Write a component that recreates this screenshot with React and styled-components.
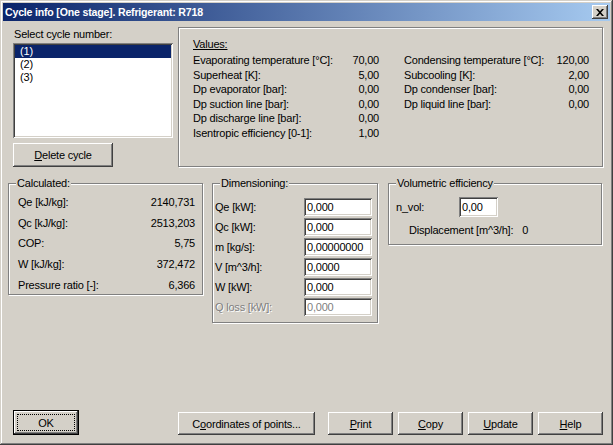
import React from "react";
import styled, { createGlobalStyle } from "styled-components";

const GlobalStyle = createGlobalStyle`
  body {
    margin: 0;
    background: #d4d0c8;
  }
  * {
    box-sizing: border-box;
  }
`;

const face = "#d4d0c8";
const font = `"Liberation Sans", Arial, sans-serif`;

const raised = `
  box-shadow: inset -1px -1px #404040, inset 1px 1px #ffffff,
    inset -2px -2px #808080, inset 2px 2px ${face};
`;

const sunken = `
  box-shadow: inset 1px 1px #808080, inset -1px -1px #ffffff,
    inset 2px 2px #404040, inset -2px -2px ${face};
`;

const etched = `
  border: 1px solid #808080;
  box-shadow: inset 1px 1px #ffffff, 1px 1px #ffffff;
`;

const Window = styled.div`
  width: 613px;
  height: 445px;
  background: ${face};
  padding: 3px;
  display: flex;
  flex-direction: column;
  box-shadow: inset -1px -1px #404040, inset 1px 1px ${face},
    inset -2px -2px #808080, inset 2px 2px #ffffff;
  font-family: ${font};
  font-size: 11px;
  letter-spacing: -0.2px;
  color: #000;
`;

const TitleBar = styled.div`
  height: 18px;
  flex: none;
  display: flex;
  align-items: center;
  justify-content: space-between;
  padding: 0 2px 0 2px;
  background: linear-gradient(to right, #0a246a, #a6caf0);
`;

const TitleText = styled.span`
  color: #fff;
  font-weight: bold;
  font-size: 10.6px;
  letter-spacing: -0.2px;
`;

const CloseBtn = styled.div`
  width: 16px;
  height: 14px;
  background: ${face};
  ${raised}
  display: flex;
  align-items: center;
  justify-content: center;
`;

const Content = styled.div`
  flex: 1;
  display: flex;
  flex-direction: column;
  padding: 6px 7px 7px 5px;
`;

const TopRow = styled.div`
  display: flex;
  gap: 5px;
  margin-left: 5px;
`;

const LeftCol = styled.div`
  width: 160px;
  display: flex;
  flex-direction: column;
`;

const Caption = styled.div`
  height: 13px;
  line-height: 13px;
  margin: 1px 0 2px 1px;
`;

const ListBox = styled.div`
  height: 95px;
  background: #fff;
  ${sunken}
  padding: 2px;
`;

const ListItem = styled.div`
  height: 13px;
  line-height: 13px;
  padding-left: 5px;
  background: ${(p) => (p.$selected ? "#0a246a" : "transparent")};
  color: ${(p) => (p.$selected ? "#fff" : "#000")};
`;

const Button = styled.div`
  width: ${(p) => p.$w}px;
  height: ${(p) => p.$h || 23}px;
  margin-top: ${(p) => p.$mt || 0}px;
  background: ${face};
  ${raised}
  display: flex;
  align-items: center;
  justify-content: center;
  flex: none;
  position: relative;
`;

const DefaultButton = styled(Button)`
  box-shadow: inset 0 0 0 1px #000, inset -2px -2px #404040,
    inset 2px 2px #ffffff, inset -3px -3px #808080;
`;

const Focus = styled.span`
  position: absolute;
  inset: 4px;
  border: 1px dotted #000;
`;

const ValuesPanel = styled.div`
  width: 425px;
  height: 140px;
  ${etched}
  padding: 9px 0 0 14px;
`;

const ValuesTitle = styled.div`
  line-height: 14.6px;
  text-decoration: underline;
  margin-bottom: 1.4px;
`;

const ValuesCols = styled.div`
  display: flex;
  gap: 25px;
`;

const ValueGrid = styled.div`
  width: ${(p) => p.$w}px;
  display: grid;
  grid-template-columns: 1fr auto;
  grid-auto-rows: 14.6px;
  line-height: 14.6px;
`;

const Right = styled.span`
  text-align: right;
`;

const MiddleRow = styled.div`
  display: flex;
  align-items: flex-start;
  margin-top: 16px;
`;

const Group = styled.div`
  position: relative;
  width: ${(p) => p.$w}px;
  height: ${(p) => p.$h}px;
  margin-left: ${(p) => p.$ml || 0}px;
  ${etched}
  padding: ${(p) => p.$pad};
`;

const Legend = styled.span`
  position: absolute;
  top: -7px;
  left: 7px;
  padding: 0 1px;
  line-height: 13px;
  background: ${face};
`;

const CalcRow = styled.div`
  height: 20.6px;
  display: flex;
  align-items: center;
  justify-content: space-between;
`;

const DimGrid = styled.div`
  display: grid;
  grid-template-columns: 1fr 68px;
  grid-auto-rows: 18px;
  row-gap: 2px;
  align-items: center;
`;

const Label = styled.span`
  color: ${(p) => (p.$disabled ? "#808080" : "#000")};
  text-shadow: ${(p) => (p.$disabled ? "1px 1px #fff" : "none")};
`;

const Input = styled.div`
  width: ${(p) => p.$w || 68}px;
  height: ${(p) => p.$h || 18}px;
  background: #fff;
  ${sunken}
  padding: 0 3px;
  display: flex;
  align-items: center;
  color: ${(p) => (p.$disabled ? "#808080" : "#000")};
`;

const VolRow = styled.div`
  display: flex;
  align-items: center;
`;

const VolLabel = styled.span`
  width: 63px;
`;

const Displacement = styled.div`
  display: flex;
  gap: 9px;
  margin: 7px 0 0 13px;
  line-height: 13px;
`;

const Spacer = styled.div`
  flex: 1;
`;

const BottomRow = styled.div`
  display: flex;
  align-items: flex-end;
  margin-left: 5px;
  gap: 5px;
`;

const U = styled.span`
  text-decoration: underline;
`;

const calculated = [
  ["Qe [kJ/kg]:", "2140,731"],
  ["Qc [kJ/kg]:", "2513,203"],
  ["COP:", "5,75"],
  ["W [kJ/kg]:", "372,472"],
  ["Pressure ratio [-]:", "6,366"],
];

const leftValues = [
  ["Evaporating temperature [°C]:", "70,00"],
  ["Superheat [K]:", "5,00"],
  ["Dp evaporator [bar]:", "0,00"],
  ["Dp suction line [bar]:", "0,00"],
  ["Dp discharge line [bar]:", "0,00"],
  ["Isentropic efficiency [0-1]:", "1,00"],
];

const rightValues = [
  ["Condensing temperature [°C]:", "120,00"],
  ["Subcooling [K]:", "2,00"],
  ["Dp condenser [bar]:", "0,00"],
  ["Dp liquid line [bar]:", "0,00"],
];

const dims = [
  ["Qe [kW]:", "0,000"],
  ["Qc [kW]:", "0,000"],
  ["m [kg/s]:", "0,00000000"],
  ["V [m^3/h]:", "0,0000"],
  ["W [kW]:", "0,000"],
  ["Q loss [kW]:", "0,000", true],
];

const App = () => {
  return (
    <Window>
      <GlobalStyle />
      <TitleBar>
        <TitleText>Cycle info [One stage]. Refrigerant: R718</TitleText>
        <CloseBtn>
          <svg width="8" height="7" viewBox="0 0 8 7">
            <path d="M0 0h2l2 2.2L6 0h2L5 3.5 8 7H6L4 4.8 2 7H0l3-3.5z" fill="#000" />
          </svg>
        </CloseBtn>
      </TitleBar>
      <Content>
        <TopRow>
          <LeftCol>
            <Caption>Select cycle number:</Caption>
            <ListBox>
              <ListItem $selected>(1)</ListItem>
              <ListItem>(2)</ListItem>
              <ListItem>(3)</ListItem>
            </ListBox>
            <Button $w={100} $h={24} $mt={5}>
              <span>
                <U>D</U>elete cycle
              </span>
            </Button>
          </LeftCol>
          <ValuesPanel>
            <ValuesTitle>Values:</ValuesTitle>
            <ValuesCols>
              <ValueGrid $w={186}>
                {leftValues.map(([l, v]) => (
                  <React.Fragment key={l}>
                    <span>{l}</span>
                    <Right>{v}</Right>
                  </React.Fragment>
                ))}
              </ValueGrid>
              <ValueGrid $w={185}>
                {rightValues.map(([l, v]) => (
                  <React.Fragment key={l}>
                    <span>{l}</span>
                    <Right>{v}</Right>
                  </React.Fragment>
                ))}
              </ValueGrid>
            </ValuesCols>
          </ValuesPanel>
        </TopRow>

        <MiddleRow>
          <Group $w={195} $h={112} $pad="8px 7px 0 9px">
            <Legend>Calculated:</Legend>
            {calculated.map(([l, v]) => (
              <CalcRow key={l}>
                <span>{l}</span>
                <span>{v}</span>
              </CalcRow>
            ))}
          </Group>
          <Group $w={166} $h={140} $ml={9} $pad="14px 5px 0 2px">
            <Legend>Dimensioning:</Legend>
            <DimGrid>
              {dims.map(([l, v, dis]) => (
                <React.Fragment key={l}>
                  <Label $disabled={dis}>{l}</Label>
                  <Input $disabled={dis}>{v}</Input>
                </React.Fragment>
              ))}
            </DimGrid>
          </Group>
          <Group $w={214} $h={62} $ml={10} $pad="13px 0 0 7px">
            <Legend>Volumetric efficiency</Legend>
            <VolRow>
              <VolLabel>n_vol:</VolLabel>
              <Input $w={39} $h={20}>0,00</Input>
            </VolRow>
            <Displacement>
              <span>Displacement [m^3/h]:</span>
              <span>0</span>
            </Displacement>
          </Group>
        </MiddleRow>

        <Spacer />

        <BottomRow>
          <DefaultButton $w={66} $h={25}>
            <Focus />
            <span>OK</span>
          </DefaultButton>
          <Button $w={137} style={{ marginLeft: 94 }}>
            <span>
              C<U>o</U>ordinates of points...
            </span>
          </Button>
          <Button $w={65} style={{ marginLeft: 8 }}>
            <span>
              <U>P</U>rint
            </span>
          </Button>
          <Button $w={65}>
            <span>
              <U>C</U>opy
            </span>
          </Button>
          <Button $w={65}>
            <span>
              <U>U</U>pdate
            </span>
          </Button>
          <Button $w={65}>
            <span>
              <U>H</U>elp
            </span>
          </Button>
        </BottomRow>
      </Content>
    </Window>
  );
};

export default App;
